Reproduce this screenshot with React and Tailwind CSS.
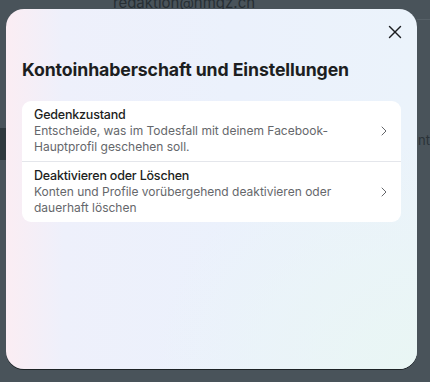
import { ChevronRight, X } from 'lucide-react'

const rows = [
  {
    title: 'Gedenkzustand',
    text: 'Entscheide, was im Todesfall mit deinem Facebook-Hauptprofil geschehen soll.',
  },
  {
    title: 'Deaktivieren oder Löschen',
    text: 'Konten und Profile vorübergehend deaktivieren oder dauerhaft löschen',
  },
]

export default function App() {
  return (
    <div className="relative h-[382px] w-[430px] overflow-hidden bg-[#49535a] font-['Inter',sans-serif]">
      {/* page behind the dialog */}
      <div className="pl-[113px] text-[15px] leading-[10px] text-[#262e33] -mt-[2px]">redaktion@nmgz.ch</div>
      <div className="mt-[11px] ml-[417px] h-px bg-[#566067]" />
      <div className="mt-[108px] h-[32px] w-[8px] bg-[#2f383d]" />
      <div className="absolute right-0 top-[131px] text-[13px] text-[#2a3237]">nt</div>

      {/* dialog */}
      <div className="absolute left-[6px] top-[9px] h-[360px] w-[411px] overflow-hidden rounded-[18px] bg-[linear-gradient(90deg,#fbedf3_0%,#eef0fb_14%,#ebf1fc_55%,#ebf3fb_100%)] shadow-[0_1px_0_#1d2326]">
        <div className="flex h-full flex-col bg-[radial-gradient(ellipse_at_100%_100%,#e9f6f4_0%,transparent_45%)]">
          <div className="flex justify-end pr-[11px] pt-[12px]">
            <X size={22} strokeWidth={1.5} className="text-[#1c1e21]" />
          </div>
          <h1 className="mt-[16px] pl-[16px] text-[17.7px] font-bold leading-[22px] tracking-[-0.1px] text-[#1c1e21]">
            Kontoinhaberschaft und Einstellungen
          </h1>
          <div className="mx-[16px] mt-[20px] overflow-hidden rounded-[9px] bg-white">
            {rows.map((r, i) => (
              <div
                key={r.title}
                className={`flex items-center pl-[12px] pr-[9px] pt-[6px] pb-[7px] ${i > 0 ? 'border-t border-[#e4e6eb]' : ''}`}
              >
                <div className="flex-1 pr-[40px]">
                  <div className="text-[12.5px] font-medium leading-[16px] tracking-[-0.2px] text-[#1c1e21]">{r.title}</div>
                  <div className="text-[12px] leading-[15.5px] text-[#65676b]">{r.text}</div>
                </div>
                <ChevronRight size={16} strokeWidth={1.5} className="text-[#65676b]" />
              </div>
            ))}
          </div>
        </div>
      </div>
    </div>
  )
}
